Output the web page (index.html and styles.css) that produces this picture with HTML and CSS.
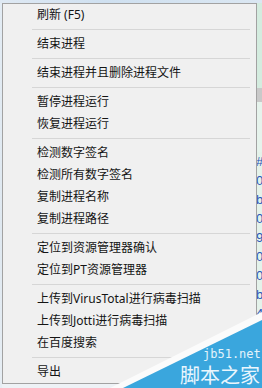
FILE: index.html
```html
<!DOCTYPE html>
<html>
<head>
<meta charset="utf-8">
<link rel="stylesheet" href="styles.css">
</head>
<body>
<div class="screen">
  <div class="top"></div>
  <div class="row">
    <div class="left"></div>
    <div class="menu">
      <div class="item">刷新 (F5)</div>
      <div class="sep"></div>
      <div class="item">结束进程</div>
      <div class="sep"></div>
      <div class="item">结束进程并且删除进程文件</div>
      <div class="sep"></div>
      <div class="item">暂停进程运行</div>
      <div class="item">恢复进程运行</div>
      <div class="sep"></div>
      <div class="item">检测数字签名</div>
      <div class="item">检测所有数字签名</div>
      <div class="item">复制进程名称</div>
      <div class="item">复制进程路径</div>
      <div class="sep"></div>
      <div class="item">定位到资源管理器确认</div>
      <div class="item">定位到PT资源管理器</div>
      <div class="sep"></div>
      <div class="item">上传到VirusTotal进行病毒扫描</div>
      <div class="item">上传到Jotti进行病毒扫描</div>
      <div class="item">在百度搜索</div>
      <div class="sep"></div>
      <div class="item">导出</div>
    </div>
    <div class="right">
      <div class="r-green"></div>
      <div class="r-gray"></div>
      <div class="r-green short"></div>
      <div class="r-text">#<br>0<br>b<br>0<br>9<br>0<br>0<br>b<br>4</div>
    </div>
  </div>
  <div class="watermark">
    <svg class="wm-shape" width="152" height="76" viewBox="0 0 152 76">
      <polygon points="0,76 152,0 152,76" fill="#fbfbfb"/>
      <polygon points="13,76 152,8 152,76" fill="#3aa6dd"/>
    </svg>
    <div class="wm-url">jb51.net</div>
    <div class="wm-name">脚本之家</div>
  </div>
</div>
</body>
</html>
```

FILE: styles.css
```css
html, body {
  margin: 0;
  padding: 0;
}
body {
  width: 262px;
  height: 388px;
  overflow: hidden;
  background: #eef2f6;
  font-family: "Noto Sans", "Noto Sans CJK SC", sans-serif;
}
.screen {
  position: relative;
  width: 262px;
  height: 388px;
  display: flex;
  flex-direction: column;
}
.top {
  height: 3px;
  background: linear-gradient(90deg, #dfe9f3 0, #cfe0f0 40%, #dbe7f2 100%);
}
.row {
  display: flex;
  flex: 1;
}
.left {
  width: 2px;
  background: linear-gradient(180deg, #e3ecf4 0, #dfe8f0 60%, #e7eef4 100%);
}
.menu {
  width: 255px;
  height: 381px;
  box-sizing: border-box;
  border: 1px solid #a2a2a2;
  background: #f0f0f0;
  display: flex;
  flex-direction: column;
}
.item {
  height: 22px;
  line-height: 22px;
  padding-left: 34px;
  font-size: 12px;
  color: #141414;
  white-space: nowrap;
}
.sep {
  height: 7px;
  margin: 0 6px 0 29px;
  position: relative;
}
.sep::before {
  content: "";
  position: absolute;
  left: 0;
  right: 0;
  top: 3px;
  height: 1px;
  background: #d6d6d6;
}
.right {
  width: 5px;
  display: flex;
  flex-direction: column;
  background: #e4f2ea;
  overflow: hidden;
}
.r-green {
  height: 85px;
  background: #d4ecdf;
}
.r-gray {
  height: 14px;
  background: #c9c9c9;
}
.r-green.short {
  height: 50px;
  background: #e6f3ec;
}
.r-text {
  font-family: "Liberation Sans", sans-serif;
  font-size: 13px;
  line-height: 19px;
  color: #2b55b8;
  margin-left: -1px;
}
.watermark {
  position: absolute;
  right: 0;
  bottom: 0;
  width: 152px;
  height: 76px;
}
.wm-shape {
  position: absolute;
  left: 0;
  top: 0;
  display: block;
}
.wm-url {
  position: absolute;
  left: 93px;
  top: 35px;
  font-family: "DejaVu Sans Mono", monospace;
  font-size: 12px;
  line-height: 14px;
  color: #e3f3fb;
  white-space: nowrap;
}
.wm-name {
  position: absolute;
  left: 70px;
  top: 51px;
  font-family: "Noto Sans CJK SC", sans-serif;
  font-size: 20px;
  line-height: 24px;
  color: #eaf6fd;
  white-space: nowrap;
}
```
